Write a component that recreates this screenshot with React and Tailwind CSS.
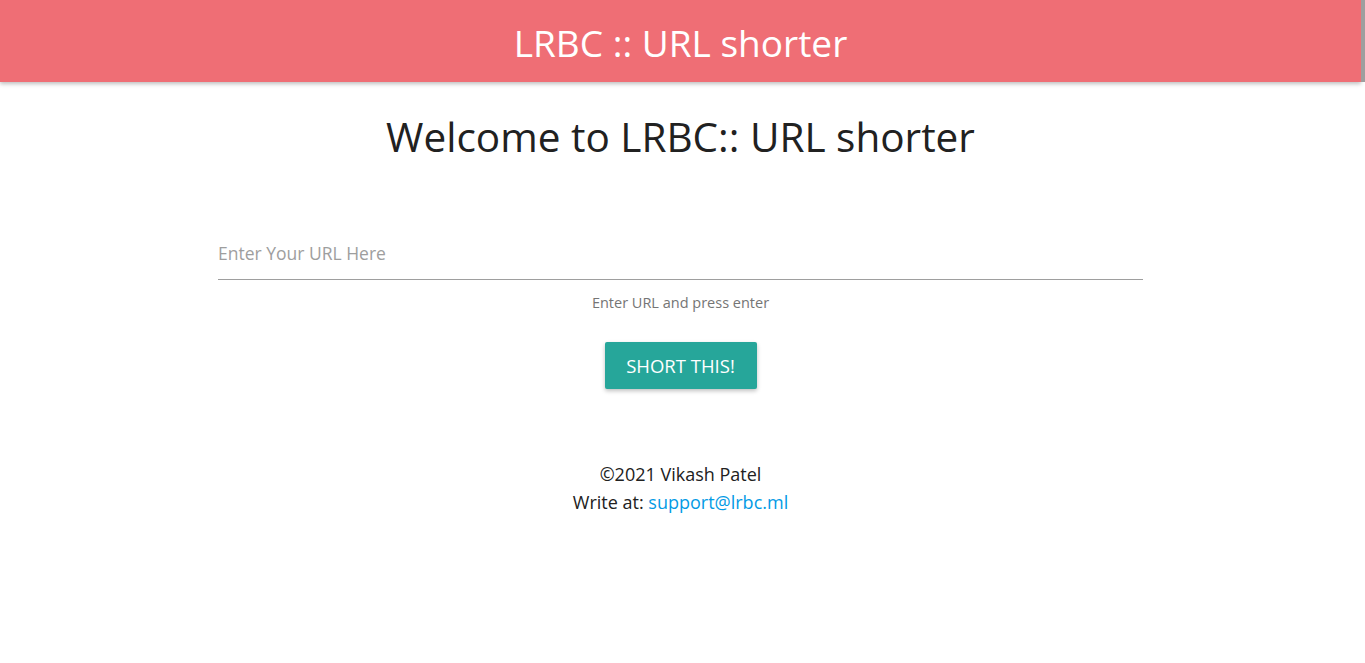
import React from 'react';

export default function App() {
  return (
    <div className="min-h-screen bg-white text-[#212121] flex" style={{ fontFamily: '"Open Sans", "Noto Sans", sans-serif' }}>
      <div className="w-[1361px] shrink-0">
        <nav className="h-[82px] bg-[#ef6e75] flex items-center justify-center shadow-[0_2px_4px_rgba(0,0,0,0.25)]">
          <h1 className="text-white text-[37px] leading-none mt-[2px]">LRBC :: URL shorter</h1>
        </nav>

        <main className="w-[931px] mx-auto flex flex-col items-center">
          <h2 className="text-[40.5px] leading-none mt-[35px]">Welcome to LRBC:: URL shorter</h2>

          <form className="w-[925px] mt-[69px]" onSubmit={(e) => e.preventDefault()}>
            <input
              type="text"
              placeholder="Enter Your URL Here"
              className="w-full h-[53px] border-b border-[#9e9e9e] text-[17.5px] outline-none placeholder:text-[#9e9e9e]"
            />
            <p className="text-center text-[14.5px] text-[#757575] mt-[12px]">Enter URL and press enter</p>
            <div className="flex justify-center mt-[29px]">
              <button
                type="submit"
                className="w-[152px] h-[47px] bg-[#26a69a] text-white text-[18.5px] uppercase rounded-[2px] shadow-[0_2px_4px_rgba(0,0,0,0.25)]"
              >
                Short this!
              </button>
            </div>
          </form>

          <footer className="mt-[71px] text-center text-[18px] leading-[28px]">
            <p>©2021 Vikash Patel</p>
            <p>
              Write at: <a href="mailto:support@lrbc.ml" className="text-[#039be5]">support@lrbc.ml</a>
            </p>
          </footer>
        </main>
      </div>
      <div className="flex-1">
        <div className="h-[82px] bg-[#9e9e9e]" />
      </div>
    </div>
  );
}
